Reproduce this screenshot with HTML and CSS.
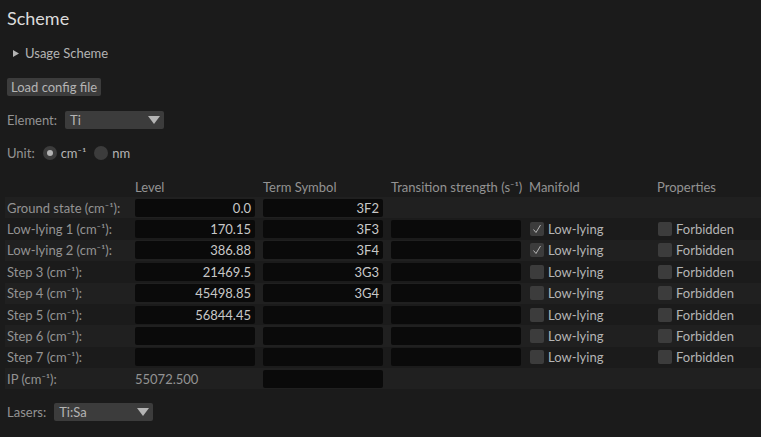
FILE: index.html
```html
<!DOCTYPE html>
<html>
<head>
<meta charset="utf-8">
<link rel="stylesheet" href="styles.css">
</head>
<body>
<div class="app">
  <h1 class="heading">Scheme</h1>
  <div class="collapse"><svg class="tri" width="6" height="7" viewBox="0 0 6 7"><path d="M0 0 L6 3.5 L0 7 Z" fill="#b4b4b4"/></svg><span class="fg">Usage Scheme</span></div>
  <div class="btn-row"><button class="btn">Load config file</button></div>
  <div class="line element-row">
    <span class="lbl">Element:</span>
    <div class="combo combo-el"><span>Ti</span><svg class="caret" width="12" height="8" viewBox="0 0 12 8"><path d="M0 0 L12 0 L6 8 Z" fill="#b4b4b4"/></svg></div>
  </div>
  <div class="line unit-row">
    <span class="lbl">Unit:</span>
    <span class="radio on"></span><span class="fg rtext">cm⁻¹</span>
    <span class="radio"></span><span class="fg rtext">nm</span>
  </div>

  <div class="table">
    <div class="trow head">
      <span></span><span class="lbl">Level</span><span class="lbl">Term Symbol</span><span class="lbl">Transition strength (s⁻¹)</span><span class="lbl">Manifold</span><span class="lbl">Properties</span>
    </div>
    <div class="trow stripe">
      <span class="lbl">Ground state (cm⁻¹):</span><div class="field">0.0</div><div class="field">3F2</div><span></span><span></span><span></span>
    </div>
    <div class="trow">
      <span class="lbl">Low-lying 1 (cm⁻¹):</span><div class="field">170.15</div><div class="field">3F3</div><div class="field"></div>
      <label class="cb"><span class="box"><svg width="14" height="14" viewBox="0 0 14 14"><path d="M3.5 7.5 L6 10.5 L10.5 3" stroke="#b4b4b4" stroke-width="1" fill="none"/></svg></span><span class="fg">Low-lying</span></label>
      <label class="cb"><span class="box"></span><span class="fg">Forbidden</span></label>
    </div>
    <div class="trow stripe">
      <span class="lbl">Low-lying 2 (cm⁻¹):</span><div class="field">386.88</div><div class="field">3F4</div><div class="field"></div>
      <label class="cb"><span class="box"><svg width="14" height="14" viewBox="0 0 14 14"><path d="M3.5 7.5 L6 10.5 L10.5 3" stroke="#b4b4b4" stroke-width="1" fill="none"/></svg></span><span class="fg">Low-lying</span></label>
      <label class="cb"><span class="box"></span><span class="fg">Forbidden</span></label>
    </div>
    <div class="trow">
      <span class="lbl">Step 3 (cm⁻¹):</span><div class="field">21469.5</div><div class="field">3G3</div><div class="field"></div>
      <label class="cb"><span class="box"></span><span class="fg">Low-lying</span></label>
      <label class="cb"><span class="box"></span><span class="fg">Forbidden</span></label>
    </div>
    <div class="trow stripe">
      <span class="lbl">Step 4 (cm⁻¹):</span><div class="field">45498.85</div><div class="field">3G4</div><div class="field"></div>
      <label class="cb"><span class="box"></span><span class="fg">Low-lying</span></label>
      <label class="cb"><span class="box"></span><span class="fg">Forbidden</span></label>
    </div>
    <div class="trow">
      <span class="lbl">Step 5 (cm⁻¹):</span><div class="field">56844.45</div><div class="field"></div><div class="field"></div>
      <label class="cb"><span class="box"></span><span class="fg">Low-lying</span></label>
      <label class="cb"><span class="box"></span><span class="fg">Forbidden</span></label>
    </div>
    <div class="trow stripe">
      <span class="lbl">Step 6 (cm⁻¹):</span><div class="field"></div><div class="field"></div><div class="field"></div>
      <label class="cb"><span class="box"></span><span class="fg">Low-lying</span></label>
      <label class="cb"><span class="box"></span><span class="fg">Forbidden</span></label>
    </div>
    <div class="trow">
      <span class="lbl">Step 7 (cm⁻¹):</span><div class="field"></div><div class="field"></div><div class="field"></div>
      <label class="cb"><span class="box"></span><span class="fg">Low-lying</span></label>
      <label class="cb"><span class="box"></span><span class="fg">Forbidden</span></label>
    </div>
    <div class="trow stripe">
      <span class="lbl">IP (cm⁻¹):</span><span class="lbl">55072.500</span><div class="field"></div><span></span><span></span><span></span>
    </div>
  </div>

  <div class="line lasers-row">
    <span class="lbl">Lasers:</span>
    <div class="combo combo-las"><span>Ti:Sa</span><svg class="caret" width="12" height="8" viewBox="0 0 12 8"><path d="M0 0 L12 0 L6 8 Z" fill="#b4b4b4"/></svg></div>
  </div>
</div>
</body>
</html>
```
FILE: styles.css
```css
html, body {
  margin: 0;
  padding: 0;
  background: #1b1b1b;
  height: 100%;
  overflow: hidden;
}
body {
  font-family: "Lato", "Noto Sans", sans-serif;
  font-size: 13px;
  color: #8c8c8c;
}
.app {
  padding: 8px 0 0 7px;
}
.heading {
  margin: 0;
  font-size: 18px;
  line-height: 20px;
  font-weight: 400;
  color: #dcdcdc;
}
.fg { color: #b4b4b4; }
.lbl { color: #939393; white-space: nowrap; }
.collapse {
  margin-top: 15px;
  height: 20px;
  display: flex;
  align-items: center;
  padding-left: 6px;
}
.tri {
  display: block;
  margin-right: 6px;
}
.btn-row { margin-top: 15px; height: 18px; display: flex; }
.btn {
  font: inherit;
  color: #b4b4b4;
  background: #3c3c3c;
  border: none;
  border-radius: 2px;
  height: 18px;
  padding: 0 4px;
  margin: 0;
}
.line {
  display: flex;
  align-items: center;
  height: 18px;
  margin-top: 15px;
}
.combo {
  background: #3c3c3c;
  border-radius: 2px;
  height: 18px;
  display: flex;
  align-items: center;
  justify-content: space-between;
  padding: 0 4px 0 5px;
  box-sizing: border-box;
  color: #b4b4b4;
}
.combo-el { width: 99px; margin-left: 8px; }
.combo-las { width: 99px; margin-left: 8px; }
.caret { display: block; }
.radio {
  width: 14px;
  height: 14px;
  border-radius: 50%;
  background: #3c3c3c;
  position: relative;
  margin-left: 8px;
  box-sizing: border-box;
}
.radio.on::after {
  content: "";
  position: absolute;
  left: 4px;
  top: 4px;
  width: 6px;
  height: 6px;
  border-radius: 50%;
  background: #b4b4b4;
}
.rtext { margin-left: 4px; }
.unit-row .radio:first-of-type { margin-left: 7px; }
.table {
  margin-top: 15px;
  margin-left: -2px;
}
.trow {
  display: grid;
  grid-template-columns: 120px 120px 120px 130px 120px 1fr;
  column-gap: 8px;
  align-items: center;
  height: 21.375px;
  padding-left: 2px;
}
.trow.head { height: 20px; }
.trow.stripe { background: #202020; }
.field {
  background: #0a0a0a;
  border-radius: 2px;
  height: 18px;
  line-height: 18px;
  text-align: right;
  padding-right: 4px;
  box-sizing: border-box;
  color: #c8c8c8;
}
.cb {
  display: flex;
  align-items: center;
  margin-left: 1px;
}
.box {
  width: 14px;
  height: 14px;
  background: #3c3c3c;
  border-radius: 2px;
  margin-right: 4px;
  display: block;
}
.box svg { display: block; }
.lasers-row { margin-top: 14px; }
```
